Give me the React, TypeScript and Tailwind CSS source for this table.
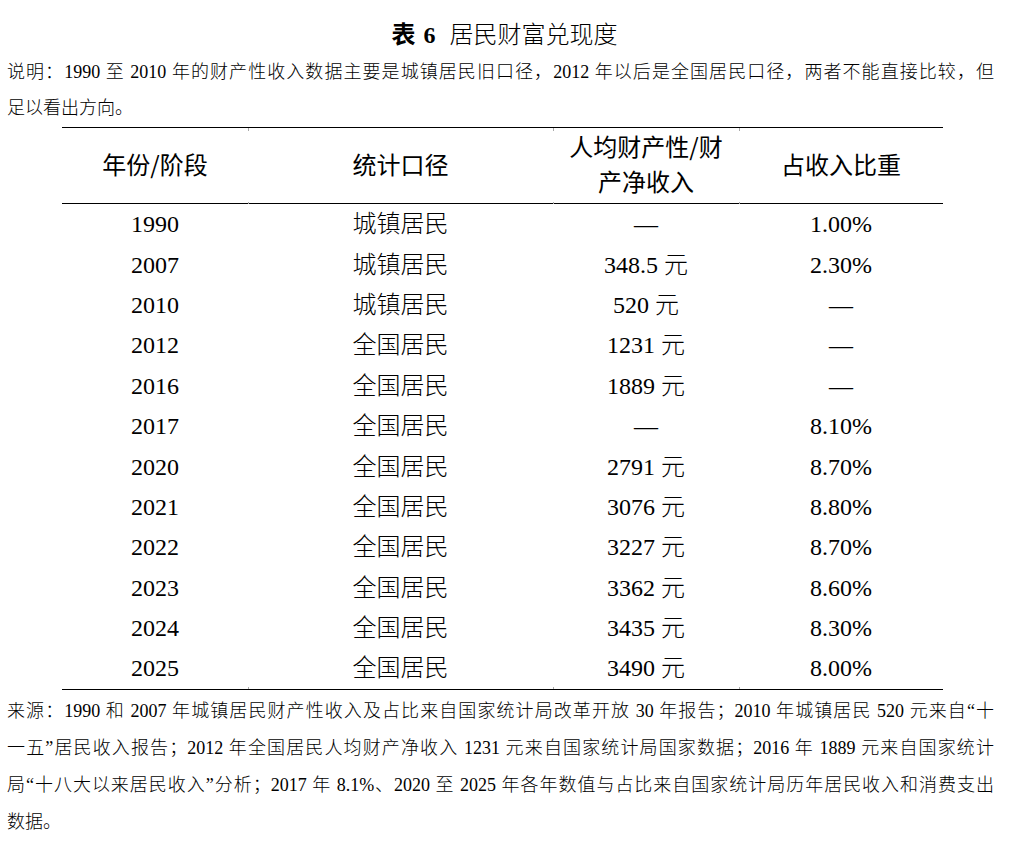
import React from "react";

const rows: string[][] = [
  ["1990", "城镇居民", "—", "1.00%"],
  ["2007", "城镇居民", "348.5 元", "2.30%"],
  ["2010", "城镇居民", "520 元", "—"],
  ["2012", "全国居民", "1231 元", "—"],
  ["2016", "全国居民", "1889 元", "—"],
  ["2017", "全国居民", "—", "8.10%"],
  ["2020", "全国居民", "2791 元", "8.70%"],
  ["2021", "全国居民", "3076 元", "8.80%"],
  ["2022", "全国居民", "3227 元", "8.70%"],
  ["2023", "全国居民", "3362 元", "8.60%"],
  ["2024", "全国居民", "3435 元", "8.30%"],
  ["2025", "全国居民", "3490 元", "8.00%"],
];

const cols = "grid grid-cols-[186px_305px_186px_204px]";

export default function App() {
  return (
    <div className="w-[1009px] min-h-[841px] bg-white text-black font-['Liberation_Serif','Noto_Sans_CJK_SC',serif]">
      <div className="pt-[20px] text-center text-[24px] leading-[30px]">
        <span className="font-bold">表</span>
        <span className="font-bold ml-[8px]">6</span>
        <span className="ml-[14px] font-light">居民财富兑现度</span>
      </div>

      <div className="mt-[4px] pl-[7px] pr-[15px] text-[18px] leading-[36px] font-light">
        <div className="text-justify [text-align-last:justify]">
          说明：1990 至 2010 年的财产性收入数据主要是城镇居民旧口径，2012 年以后是全国居民口径，两者不能直接比较，但
        </div>
        <div>足以看出方向。</div>
      </div>

      <div className="mt-[1px] ml-[62px] w-[881px]">
        <div className={`${cols} h-[77px] pb-[6px] border-y border-black text-[24px] leading-[35px] font-['Noto_Sans_CJK_SC',sans-serif]`}>
          {["年份/阶段", "统计口径", "人均财产性/财|产净收入", "占收入比重"].map((h, i) => (
            <div
              key={i}
              className={`relative flex items-center justify-center text-center ${
                i > 0
                  ? "before:absolute before:left-0 before:top-0 before:h-[3px] before:w-px before:bg-[#aaa] after:absolute after:left-0 after:-bottom-[6px] after:h-[2px] after:w-px after:bg-[#aaa]"
                  : ""
              }`}
            >
              <div>
                {h.split("|").map((l, j) => (
                  <div key={j}>{l}</div>
                ))}
              </div>
            </div>
          ))}
        </div>

        <div className="border-b border-black text-[24px] font-light">
          {rows.map((r, ri) => (
            <div key={ri} className={`${cols} h-[40.4px]`}>
              {r.map((c, ci) => (
                <div
                  key={ci}
                  className={`relative flex items-center justify-center leading-none ${
                    ri === rows.length - 1 && ci > 0
                      ? "after:absolute after:left-0 after:bottom-0 after:h-[2px] after:w-px after:bg-[#aaa]"
                      : ""
                  }`}
                >
                  {c}
                </div>
              ))}
            </div>
          ))}
        </div>
      </div>

      <div className="mt-[3px] pl-[7px] pr-[15px] text-[18px] leading-[37px] font-light">
        <div className="text-justify [text-align-last:justify]">
          来源：1990 和 2007 年城镇居民财产性收入及占比来自国家统计局改革开放 30 年报告；2010 年城镇居民 520 元来自“十
        </div>
        <div className="text-justify [text-align-last:justify]">
          一五”居民收入报告；2012 年全国居民人均财产净收入 1231 元来自国家统计局国家数据；2016 年 1889 元来自国家统计
        </div>
        <div className="text-justify [text-align-last:justify]">
          局“十八大以来居民收入”分析；2017 年 8.1%、2020 至 2025 年各年数值与占比来自国家统计局历年居民收入和消费支出
        </div>
        <div>数据。</div>
      </div>
    </div>
  );
}
